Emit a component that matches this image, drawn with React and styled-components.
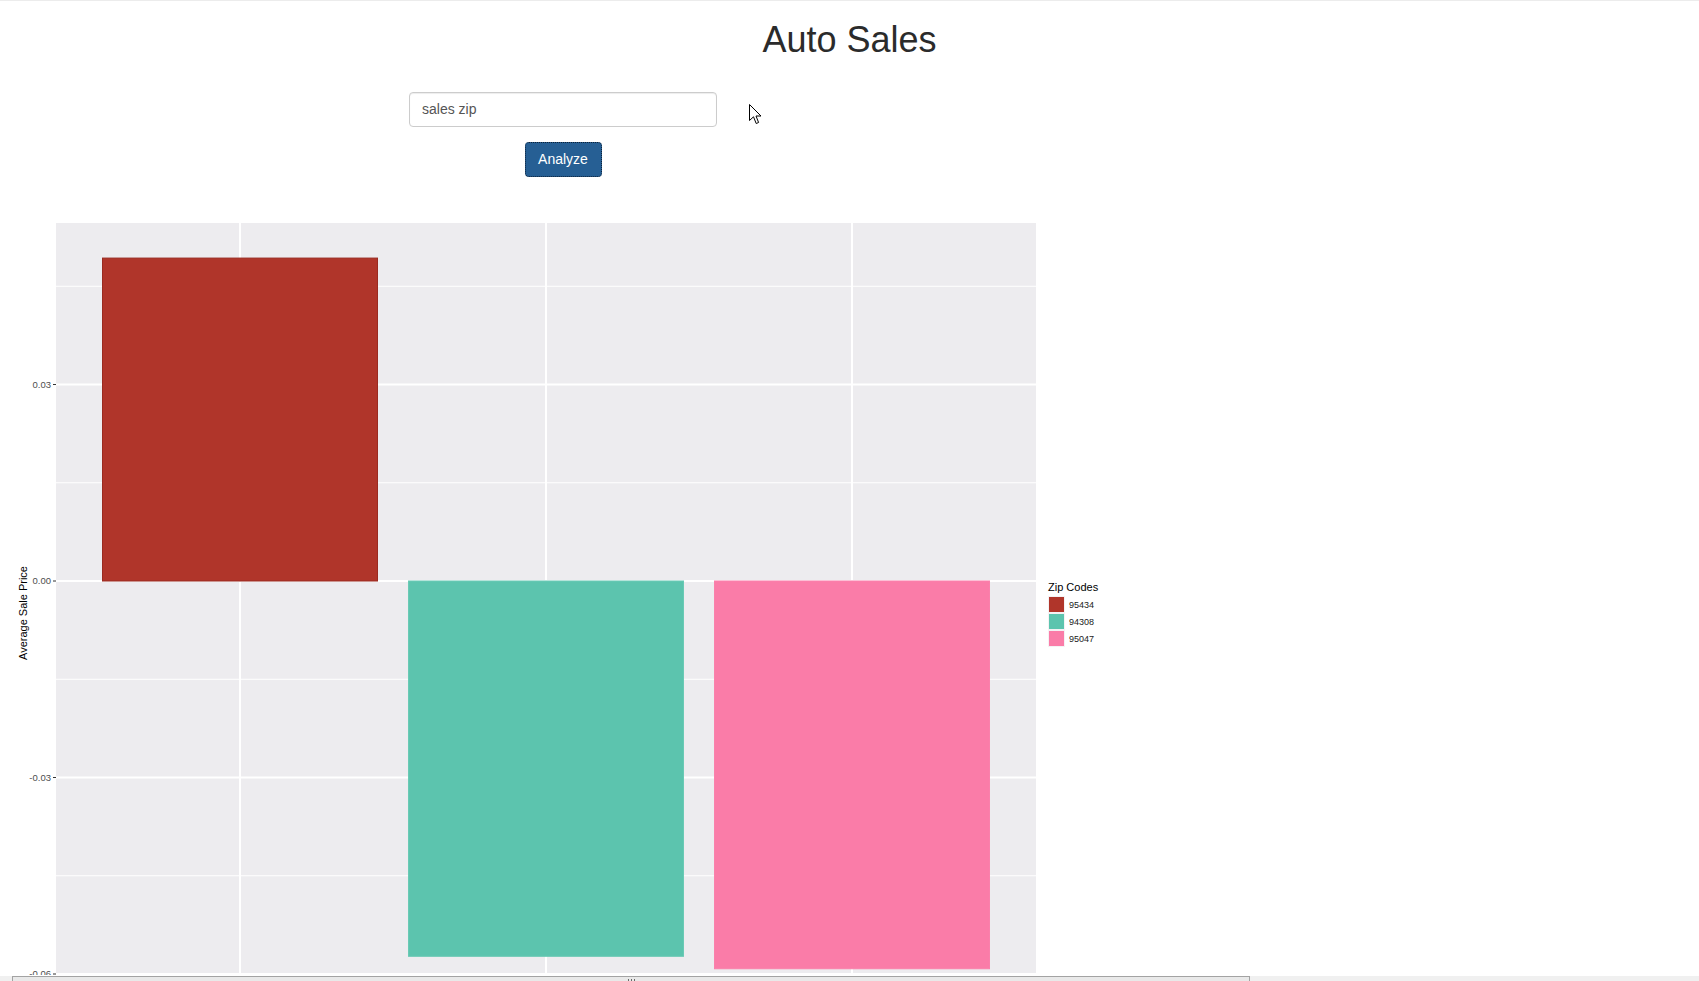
import React from "react";
import styled, { createGlobalStyle } from "styled-components";

const Global = createGlobalStyle`
  html, body { margin: 0; padding: 0; background: #fff; }
  body {
    font-family: "Liberation Sans", Arial, Helvetica, sans-serif;
    color: #333;
    overflow: hidden;
    border-top: 1px solid #ececec;
  }
`;

const Page = styled.div`
  position: relative;
  display: flow-root;
  width: 1699px;
`;

const Title = styled.h1`
  margin: 19px 0 0;
  font-size: 36px;
  line-height: 1.1;
  font-weight: 400;
  text-align: center;
  color: #2b2b2b;
`;

const Form = styled.div`
  margin: 32px 0 0 409px;
  width: 308px;
  display: flex;
  flex-direction: column;
  align-items: center;
  gap: 15px;
`;

const TextInput = styled.input`
  box-sizing: border-box;
  width: 100%;
  height: 35px;
  padding: 6px 12px;
  font-family: inherit;
  font-size: 14px;
  color: #555;
  background: #fff;
  border: 1px solid #ccc;
  border-radius: 4px;
  box-shadow: inset 0 1px 1px rgba(0, 0, 0, 0.075);
  outline: none;
`;

const Button = styled.button`
  box-sizing: border-box;
  height: 35px;
  width: 77px;
  padding: 6px 12px;
  font-family: inherit;
  font-size: 14px;
  line-height: 20px;
  color: #fff;
  background: #265f94;
  border: 1px dotted #0e2238;
  border-radius: 4px;
`;

const PlotRow = styled.div`
  margin-top: 22px;
  display: flex;
  align-items: center;
`;

const Legend = styled.div`
  margin-left: 8px;
  padding-top: 4px;
  display: flex;
  flex-direction: column;
`;

const LegendTitle = styled.div`
  font-size: 11px;
  line-height: 11px;
  color: #000;
  margin-bottom: 3px;
`;

const LegendItem = styled.div`
  display: flex;
  align-items: center;
  height: 17px;
  gap: 4px;
`;

const Key = styled.span`
  box-sizing: border-box;
  width: 17px;
  height: 17px;
  background: ${(p) => p.$color};
  border: 1px solid #f4f2f4;
`;

const KeyLabel = styled.span`
  font-size: 9px;
  color: #1a1a1a;
`;

const Cursor = styled.svg`
  position: absolute;
  left: 749px;
  top: 103px;
`;

const Scrollbar = styled.div`
  position: fixed;
  left: 0;
  right: 0;
  bottom: 0;
  height: 5px;
  background: #f0f0f0;
  border-top: 1px solid #fff;
  display: flex;
`;

const ScrollArrow = styled.div`
  width: 12px;
  background: #f0f0f0;
`;

const ScrollThumb = styled.div`
  box-sizing: border-box;
  width: 1238px;
  background: #e9e9e9;
  border: 1px solid #a3a3a3;
  border-bottom: none;
  display: flex;
  justify-content: center;
  padding-top: 2px;
`;

const Grip = styled.div`
  width: 7px;
  height: 4px;
  background: repeating-linear-gradient(90deg, #6a6a6a 0 1px, transparent 1px 3px);
`;

const ZERO = 382;
const K = 6550;
const yOf = (v) => ZERO - v * K;

const bars = [
  { x: 102, w: 276, v: 0.0493, color: "#b0352a", stroke: "#9a2a20" },
  { x: 408, w: 276, v: -0.0573, color: "#5cc4ae", stroke: "#6acab5" },
  { x: 714, w: 276, v: -0.0592, color: "#fa7ca8", stroke: "#fa80ab" },
];

const majors = [0.03, 0, -0.03, -0.06];
const minors = [0.045, 0.015, -0.015, -0.045];
const labels = { "0.03": "0.03", "0": "0.00", "-0.03": "-0.03", "-0.06": "-0.06" };

function Chart() {
  return (
    <svg width="1040" height="828" viewBox="0 0 1040 828">
      <rect x="56" y="24" width="980" height="781" fill="#edecef" />
      {minors.map((v) => (
        <line key={v} x1="56" x2="1036" y1={yOf(v)} y2={yOf(v)} stroke="#fff" strokeWidth="1" />
      ))}
      {majors.map((v) => (
        <line key={v} x1="56" x2="1036" y1={yOf(v)} y2={yOf(v)} stroke="#fff" strokeWidth="2" />
      ))}
      {[240, 546, 852].map((x) => (
        <line key={x} x1={x} x2={x} y1="24" y2="805" stroke="#fff" strokeWidth="2" />
      ))}
      {bars.map((b) => {
        const y0 = yOf(0);
        const y1 = yOf(b.v);
        return (
          <rect
            key={b.x}
            x={b.x + 0.5}
            y={Math.min(y0, y1)}
            width={b.w - 1}
            height={Math.abs(y1 - y0)}
            fill={b.color}
            stroke={b.stroke}
            strokeWidth="1"
          />
        );
      })}
      {majors.map((v) => (
        <g key={v}>
          <line x1="53" x2="56" y1={yOf(v)} y2={yOf(v)} stroke="#333" strokeWidth="1" />
          <text
            x="51"
            y={yOf(v) + 3.4}
            textAnchor="end"
            fontSize="9.5"
            fill="#4d4d4d"
            fontFamily="'Liberation Sans', Arial, sans-serif"
          >
            {labels[String(v)]}
          </text>
        </g>
      ))}
      <text
        transform="translate(26.5 414) rotate(-90)"
        textAnchor="middle"
        fontSize="11"
        fill="#000"
        fontFamily="'Liberation Sans', Arial, sans-serif"
      >
        Average Sale Price
      </text>
    </svg>
  );
}

const legend = [
  { code: "95434", color: "#b0352a" },
  { code: "94308", color: "#5cc4ae" },
  { code: "95047", color: "#fa7ca8" },
];

export default function App() {
  return (
    <Page>
      <Global />
      <Title>Auto Sales</Title>
      <Form>
        <TextInput defaultValue="sales zip" />
        <Button>Analyze</Button>
      </Form>
      <PlotRow>
        <Chart />
        <Legend>
          <LegendTitle>Zip Codes</LegendTitle>
          {legend.map((l) => (
            <LegendItem key={l.code}>
              <Key $color={l.color} />
              <KeyLabel>{l.code}</KeyLabel>
            </LegendItem>
          ))}
        </Legend>
      </PlotRow>
      <Cursor width="13" height="21" viewBox="0 0 13 21">
        <path
          d="M0.5 0.5 L0.5 16.5 L4.5 12.8 L7.2 19.5 L9.6 18.5 L7 12 L12 12 Z"
          fill="#fff"
          stroke="#000"
          strokeWidth="1"
          strokeLinejoin="miter"
        />
      </Cursor>
      <Scrollbar>
        <ScrollArrow />
        <ScrollThumb>
          <Grip />
        </ScrollThumb>
      </Scrollbar>
    </Page>
  );
}
